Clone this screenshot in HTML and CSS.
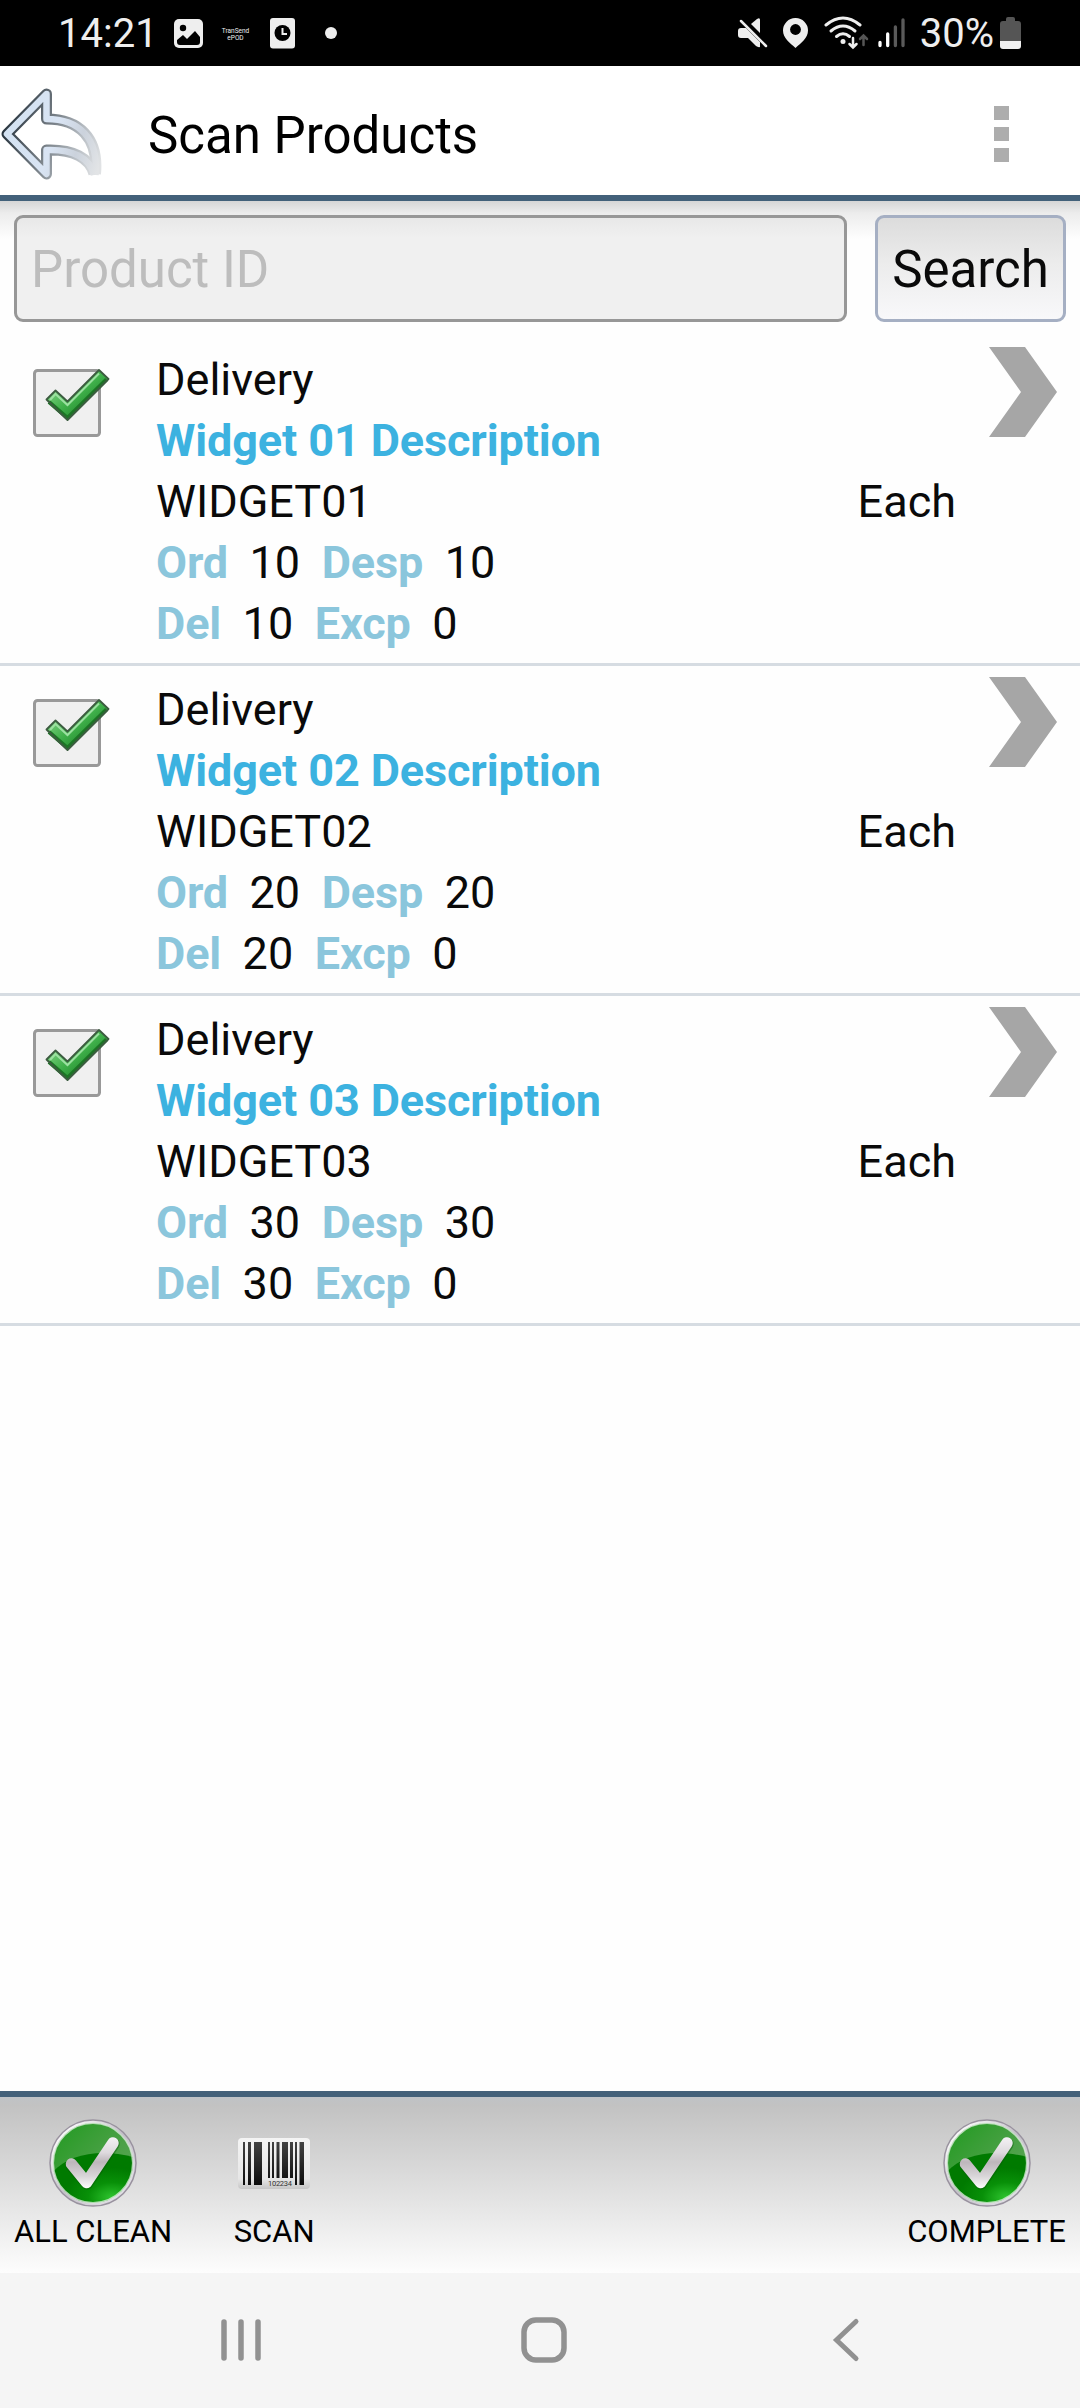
FILE: index.html
```html
<!DOCTYPE html>
<html lang="en">
<head>
    <meta charset="UTF-8">
    <title>Scan Products</title>
    <link rel="stylesheet" href="styles.css">
</head>
<body>
    <!-- shared icons -->
    <svg class="defs" width="0" height="0">
        <defs>
            <linearGradient id="tickGreen" x1="0" y1="0" x2="1" y2="1">
                <stop offset="0.2" stop-color="#7fd182"/>
                <stop offset="0.5" stop-color="#3fb04a"/>
                <stop offset="0.8" stop-color="#1c8226"/>
            </linearGradient>
            <linearGradient id="ballTop" x1="0" y1="0" x2="1" y2="1">
                <stop offset="0" stop-color="#1f9a1f"/>
                <stop offset="0.5" stop-color="#48a043"/>
                <stop offset="1" stop-color="#63a860"/>
            </linearGradient>
            <radialGradient id="ballBottom" cx="0.72" cy="0.82" r="0.55">
                <stop offset="0" stop-color="#2fc42f"/>
                <stop offset="0.5" stop-color="#089008"/>
                <stop offset="1" stop-color="#007a00"/>
            </radialGradient>
            <linearGradient id="ballRim" x1="0" y1="0" x2="1" y2="1">
                <stop offset="0.1" stop-color="#ffffff"/>
                <stop offset="0.5" stop-color="#c4c0c8"/>
                <stop offset="0.9" stop-color="#e4e2e8"/>
            </linearGradient>
            <linearGradient id="ballTick" gradientUnits="userSpaceOnUse" x1="0" y1="18" x2="0" y2="70">
                <stop offset="0" stop-color="#f4f2f4"/>
                <stop offset="0.3" stop-color="#dedade"/>
                <stop offset="0.48" stop-color="#bdb6bb"/>
                <stop offset="0.75" stop-color="#d8d5d8"/>
                <stop offset="1" stop-color="#ffffff"/>
            </linearGradient>
            <clipPath id="ballClip"><circle cx="44" cy="44" r="40"/></clipPath>
        </defs>
        <symbol id="checkbox" viewBox="0 0 78 70">
            <rect x="1.5" y="1.5" width="65" height="65" rx="3" fill="#f0f0f0" stroke="#999" stroke-width="3"/>
            <path d="M13.5 30.500L22.5 21.500L34.500 32.500L66 1L75.500 10L34.500 51Z" fill="url(#tickGreen)"/>
            <path d="M16 33L34.500 49L73.500 10.500" fill="none" stroke="#1c7525" stroke-width="4"/>
            <path d="M17 31L22.500 25L34.500 36L66 4.500" fill="none" stroke="#9be0a0" stroke-width="2"/>
            <path d="M13.5 30.500L22.5 21.500L34.500 32.500L66 1L75.500 10L34.500 51Z" fill="none" stroke="#3c5c40" stroke-width="1.800" stroke-linejoin="round"/>
        </symbol>
        <symbol id="ball" viewBox="0 0 88 88">
            <circle cx="44" cy="44" r="43" fill="url(#ballRim)" stroke="#99929f" stroke-width="1.500"/>
            <circle cx="44" cy="44" r="40" fill="url(#ballTop)"/>
            <path d="M0 58 C14 36 50 28 88 39 V88 H0Z" fill="url(#ballBottom)" clip-path="url(#ballClip)"/>
            <circle cx="44" cy="44" r="39.700" fill="none" stroke="#e2f0e2" stroke-opacity=".75" stroke-width="1.500"/>
            <path d="M22.500 46 L38 64.500 L64.500 25" fill="none" stroke="#075c07" stroke-opacity=".45" stroke-width="12.500" stroke-linecap="round" stroke-linejoin="round"/>
            <path d="M22.500 45 L37.500 63.500 L64 24" fill="none" stroke="url(#ballTick)" stroke-width="11.500" stroke-linecap="round" stroke-linejoin="round"/>
        </symbol>
        <symbol id="chevron" viewBox="0 0 68 90">
            <path d="M0 0H36L68 45L36 90H0L32 45Z" fill="#a6a6a6"/>
        </symbol>
    </svg>

    <div class="status-bar">
        <span class="clock">14:21</span>
        <svg class="photo-icon" width="29" height="29" viewBox="0 0 29 29">
            <rect width="29" height="29" rx="5" fill="#eee"/>
            <circle cx="9" cy="9" r="3.200"/>
            <path d="M3 21L9 16L13 20L21 12L26 18V23Q26 26 23 26H6Q3 26 3 23Z"/>
        </svg>
        <span class="app-note">TranSend<br>ePOD</span>
        <svg class="timer-icon" width="26" height="31" viewBox="0 0 26 31">
            <rect width="25" height="30.500" rx="3" fill="#eee"/>
            <circle cx="12.500" cy="15" r="8"/>
            <path d="M12.500 10V16H17" fill="none" stroke="#eee" stroke-width="2"/>
        </svg>
        <span class="more-dot"></span>

        <div class="status-right">
            <svg width="30" height="30" viewBox="0 0 30 30" fill="#eee">
                <path d="M13 6L19 1Q22 -1 22 2V15Z"/>
                <path d="M0 13Q0 10 3 10H8L22 24V29Q20 29.500 18 28L10 20H3Q0 20 0 17Z"/>
                <path d="M3 3L28 28" stroke="#eee" stroke-width="2.500" stroke-linecap="round"/>
            </svg>
            <svg class="pin" width="25" height="30" viewBox="0 0 25 30">
                <path d="M12.500 0A12.400 12.400 0 0 0 0 12.500C0 20 7 25 12.500 30C18 25 25 20 25 12.500A12.400 12.400 0 0 0 12.500 0Z" fill="#eee"/>
                <circle cx="12.500" cy="11.500" r="5.400"/>
            </svg>
            <svg class="wifi" width="45" height="34" viewBox="0 0 45 34" fill="none" stroke="#eee" stroke-width="3" stroke-linecap="round">
                <path d="M2 9Q19 -5 36 9"/>
                <path d="M7 15Q19 5 31 15"/>
                <path d="M12.500 20.500Q19 15 25.500 20.500"/>
                <circle cx="19" cy="25.500" r="2.500" fill="#eee" stroke="none"/>
                <path d="M29 22V31M25.500 28L29 31.500L32.500 28" stroke-width="2.500"/>
                <path d="M39.500 29V20M36 23L39.500 19.500L43 23" stroke="#555" stroke-width="2.500"/>
            </svg>
            <svg class="signal" width="28" height="30" viewBox="0 0 28 30" stroke-width="3.300" stroke-linecap="round">
                <path d="M2 24.500V27.500M9.700 16V27.500" stroke="#fff"/>
                <path d="M17.400 9V27.500M25 2V27.500" stroke="#5a5a5a"/>
            </svg>
            <span class="percent">30%</span>
            <svg class="battery" width="21" height="32" viewBox="0 0 21 32">
                <path d="M6 4V2Q6 0 8 0H13Q15 0 15 2V4H18Q21 4 21 7V24H0V7Q0 4 3 4Z" fill="#555"/>
                <path d="M0 24H21V29Q21 32 18 32H3Q0 32 0 29Z" fill="#f0f0f0"/>
            </svg>
        </div>
    </div>

    <div class="header">
        <svg class="back" width="102" height="92" viewBox="0 0 102 92">
            <defs>
                <linearGradient id="arrowEdge" gradientUnits="userSpaceOnUse" x1="2" y1="40" x2="100" y2="75">
                    <stop offset="0" stop-color="#25313b"/>
                    <stop offset="0.45" stop-color="#788087"/>
                    <stop offset="0.75" stop-color="#b8bec4"/>
                    <stop offset="1" stop-color="#e0e2e4"/>
                </linearGradient>
                <linearGradient id="arrowFill" gradientUnits="userSpaceOnUse" x1="2" y1="40" x2="100" y2="75">
                    <stop offset="0" stop-color="#d3e2f2"/>
                    <stop offset="0.5" stop-color="#d9e4f3"/>
                    <stop offset="0.75" stop-color="#cbd2dc"/>
                    <stop offset="1" stop-color="#e2e4e6"/>
                </linearGradient>
            </defs>
            <g fill="none" stroke-linejoin="round">
                <path d="M95.500 86C99 50 79 31 46.500 31V6L7 46L46.500 86V62C73 61 90 70 94 86" stroke="url(#arrowEdge)" stroke-width="11"/>
                <path d="M95.500 87C99 50 79 31 46.500 31V6L7 46L46.500 86V62C73 61 90 70 94 87" stroke="url(#arrowFill)" stroke-width="6.500"/>
            </g>
        </svg>
        <h1>Scan Products</h1>
        <div class="menu"><i></i><i></i><i></i></div>
    </div>

    <div class="content">
        <form class="search-form">
            <input type="text" placeholder="Product ID">
            <button type="button">Search</button>
        </form>

        <ul class="product-list">
            <li>
                <svg class="checkbox" width="78" height="70"><use href="#checkbox"/></svg>
                <div class="details">
                    <div>Delivery</div>
                    <div class="description">Widget 01 Description</div>
                    <div class="code"><span>WIDGET01</span><span>Each</span></div>
                    <div class="counts"><b>Ord</b><span>10</span><b>Desp</b><span>10</span></div>
                    <div class="counts"><b>Del</b><span>10</span><b>Excp</b><span>0</span></div>
                </div>
                <svg class="chevron" width="68" height="90"><use href="#chevron"/></svg>
            </li>
            <li>
                <svg class="checkbox" width="78" height="70"><use href="#checkbox"/></svg>
                <div class="details">
                    <div>Delivery</div>
                    <div class="description">Widget 02 Description</div>
                    <div class="code"><span>WIDGET02</span><span>Each</span></div>
                    <div class="counts"><b>Ord</b><span>20</span><b>Desp</b><span>20</span></div>
                    <div class="counts"><b>Del</b><span>20</span><b>Excp</b><span>0</span></div>
                </div>
                <svg class="chevron" width="68" height="90"><use href="#chevron"/></svg>
            </li>
            <li>
                <svg class="checkbox" width="78" height="70"><use href="#checkbox"/></svg>
                <div class="details">
                    <div>Delivery</div>
                    <div class="description">Widget 03 Description</div>
                    <div class="code"><span>WIDGET03</span><span>Each</span></div>
                    <div class="counts"><b>Ord</b><span>30</span><b>Desp</b><span>30</span></div>
                    <div class="counts"><b>Del</b><span>30</span><b>Excp</b><span>0</span></div>
                </div>
                <svg class="chevron" width="68" height="90"><use href="#chevron"/></svg>
            </li>
        </ul>
    </div>

    <div class="toolbar">
        <div class="tool">
            <svg width="88" height="88"><use href="#ball"/></svg>
            <span>ALL CLEAN</span>
        </div>
        <div class="tool scan">
            <svg width="88" height="88" viewBox="0 0 88 88">
                <defs>
                    <linearGradient id="labelPaper" x1="0" y1="0" x2="0" y2="1">
                        <stop offset="0" stop-color="#f4f4f4"/>
                        <stop offset="0.8" stop-color="#e6e6e6"/>
                        <stop offset="1" stop-color="#c6c6c6"/>
                    </linearGradient>
                    <linearGradient id="ink" gradientUnits="userSpaceOnUse" x1="0" y1="22" x2="0" y2="66">
                        <stop offset="0" stop-color="#444"/>
                        <stop offset="1" stop-color="#0c0c0c"/>
                    </linearGradient>
                </defs>
                <rect x="8" y="19" width="72" height="51" rx="4" fill="url(#labelPaper)"/>
                <path d="M13 23h2v43h-2zM18 23h3v43h-3zM24 23h8v43h-8zM38 23h2v36h-2zM42 23h2v36h-2zM46.500 23h3v36h-3zM52 23h6v36h-6zM60 23h3v36h-3zM65 23h2v43h-2zM69.500 23h4.500v43h-4.500z" fill="url(#ink)"/>
                <text x="38" y="66.500" class="barcode-number" textLength="24">102234</text>
            </svg>
            <span>SCAN</span>
        </div>
        <div class="tool complete">
            <svg width="88" height="88"><use href="#ball"/></svg>
            <span>COMPLETE</span>
        </div>
    </div>

    <div class="nav-bar">
        <svg width="42" height="46" viewBox="0 0 42 46" fill="none" stroke="#919191" stroke-width="5.500" stroke-linecap="round">
            <path d="M4 5V41M21 5V41M38 5V41"/>
        </svg>
        <svg width="46" height="46" viewBox="0 0 46 46" fill="none" stroke="#919191" stroke-width="5.500">
            <rect x="3" y="3" width="40" height="40" rx="12"/>
        </svg>
        <svg width="42" height="46" viewBox="0 0 42 46" fill="none" stroke="#919191" stroke-width="5" stroke-linecap="round">
            <path d="M31 4.500L11.500 23L31 41.500"/>
        </svg>
    </div>
</body>
</html>
```
FILE: styles.css
```css
* {
    box-sizing: border-box;
}
body {
    margin: 0;
    width: 1080px;
    height: 2408px;
    display: flex;
    flex-direction: column;
    font-family: Roboto, sans-serif;
    font-size: 45px;
    color: #0a0a0a;
    background-color: #fefefe;
}
svg {
    display: block;
    flex: none;
}
.defs {
    position: absolute;
}

/* status bar */
.status-bar {
    height: 66px;
    background-color: #000;
    color: #eee;
    display: flex;
    align-items: center;
    padding: 0 59px 0 58px;
    font-size: 40px;
}
.clock {
    width: 98px;
}
.photo-icon {
    margin-left: 18px;
}
.app-note {
    width: 29px;
    margin: 4px 0 0 18px;
    font-size: 6.5px;
    line-height: 7px;
    text-align: center;
}
.timer-icon {
    margin-left: 20px;
}
.more-dot {
    width: 12px;
    height: 12px;
    margin-left: 29px;
    border-radius: 50%;
    background-color: #eee;
}
.status-right {
    display: flex;
    align-items: center;
    margin-left: auto;
}
.pin {
    margin-left: 15px;
}
.wifi {
    margin-left: 16px;
}
.signal {
    margin-left: 9px;
}
.percent {
    margin: 0 6px 0 14px;
}

/* header */
.header {
    height: 135px;
    display: flex;
    align-items: center;
    background-color: #fff;
    border-bottom: 6px solid #43617a;
}
.back {
    margin-top: 6px;
}
h1 {
    margin: 9px 0 0 46px;
    font-size: 51px;
    font-weight: 400;
    color: #000;
}
.menu {
    display: flex;
    flex-direction: column;
    gap: 7px;
    margin: 7px 71px 0 auto;
}
.menu i {
    width: 15px;
    height: 14px;
    background-color: #adadad;
}

/* search */
.content {
    flex: 1;
    background: linear-gradient(#d6d6d6 0, #ececec 12px, #fefefe 38px);
}
.search-form {
    display: flex;
    gap: 28px;
    padding: 14px 14px 14px;
}
.search-form input,
.search-form button {
    height: 107px;
    border-radius: 9px;
    font-family: inherit;
    font-size: 51px;
}
.search-form input {
    flex: 1;
    min-width: 0;
    padding: 2px 14px 0;
    border: 3px solid #979797;
    background: linear-gradient(#e8e8e8, #f0f0f0 20px);
}
.search-form input::placeholder {
    color: #bdbdbd;
}
.search-form button {
    width: 191px;
    padding: 2px 0 0;
    border: 3px solid #a5afc3;
    color: #0a0a0a;
    background: linear-gradient(#dcdcdc, #ececec 45%, #f8f8fa);
}

/* products */
.product-list {
    list-style-type: none;
    margin: 0;
    padding: 0;
}
.product-list li {
    height: 330px;
    display: flex;
    align-items: flex-start;
    border-bottom: 3px solid #d6dce2;
}
.checkbox {
    margin: 33px 0 0 33px;
}
.details {
    width: 800px;
    margin: 13px 33px 0 45px;
    line-height: 61px;
}
.description {
    font-weight: 700;
    color: #3cb2e0;
    letter-spacing: -0.12px;
}
.code {
    display: flex;
    justify-content: space-between;
}
.counts {
    display: flex;
    gap: 21.5px;
}
.counts b {
    color: #8bc6dc;
    letter-spacing: -0.12px;
}
.chevron {
    margin-top: 11px;
}

/* toolbar */
.toolbar {
    height: 182px;
    display: flex;
    padding: 22px 14px 0;
    border-top: 6px solid #43617a;
    background: linear-gradient(#bfc3c7 0, #c2c2c2 8px, #fdfdfd);
}
.tool {
    display: flex;
    flex-direction: column;
    align-items: center;
    gap: 6px;
    font-size: 31px;
    color: #000;
}
.tool.scan {
    margin-left: 58px;
}
.tool.complete {
    margin-left: auto;
}
.barcode-number {
    font-size: 7.5px;
    fill: #333;
}

/* navigation */
.nav-bar {
    height: 135px;
    display: flex;
    align-items: center;
    justify-content: space-between;
    padding: 0 213px 1px 220px;
    background-color: #f5f5f5;
}
```
